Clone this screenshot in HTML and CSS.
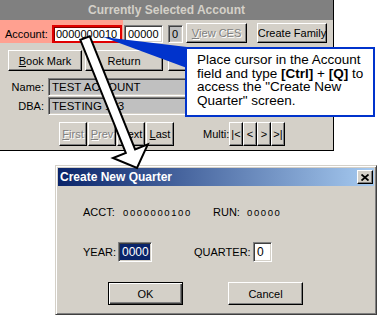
FILE: index.html
```html
<!DOCTYPE html>
<html lang="en">
    <head>
        <meta charset="utf-8"/>
        <title>Create New Quarter</title>
        <link rel="stylesheet" href="styles.css">
    </head>
    <body>
        <div class="screen">
            <div class="panel">
                <div class="panel-title">Currently Selected Account</div>
                <div class="acct-row">
                    <div class="acct-hl">
                        <span class="acct-lbl">Account:</span>
                        <div class="field acct-field">0000000010</div>
                    </div>
                    <div class="field f-run">00000</div>
                    <div class="field f-q gray">0</div>
                    <div class="btn disabled b-ces"><u>V</u>iew CES</div>
                    <div class="btn b-family">Create Family</div>
                </div>
                <div class="btn-row">
                    <div class="btn b-mark"><u>B</u>ook Mark</div>
                    <div class="btn b-return">Return</div>
                    <div class="btn b-hidden"></div>
                </div>
                <div class="info-row">
                    <span class="info-lbl">Name:</span>
                    <div class="field gray info-field">TEST ACCOUNT</div>
                </div>
                <div class="info-row dba">
                    <span class="info-lbl">DBA:</span>
                    <div class="field gray info-field">TESTING 123</div>
                </div>
                <div class="nav-row">
                    <div class="btn nav disabled"><u>F</u>irst</div>
                    <div class="btn nav disabled"><u>P</u>rev</div>
                    <div class="btn nav"><u>N</u>ext</div>
                    <div class="btn nav"><u>L</u>ast</div>
                    <span class="multi-lbl">Multi:</span>
                    <div class="btn mb">|&lt;</div>
                    <div class="btn mb">&lt;</div>
                    <div class="btn mb">&gt;</div>
                    <div class="btn mb">&gt;|</div>
                </div>
            </div>

            <div class="dlg">
                <div class="dlg-title">
                    <span>Create New Quarter</span>
                    <div class="btn dlg-close">
                        <svg width="8" height="7" viewBox="0 0 8 7">
                            <path d="M0.5 0.5 L7.5 6.5 M7.5 0.5 L0.5 6.5" stroke="#000" stroke-width="1.8" fill="none"/>
                        </svg>
                    </div>
                </div>
                <div class="dlg-body">
                    <div class="dlg-row r-acct">
                        <span class="l-acct">ACCT:</span>
                        <span class="val v-acct">0000000100</span>
                        <span class="l-run">RUN:</span>
                        <span class="val">00000</span>
                    </div>
                    <div class="dlg-row r-year">
                        <span class="l-year">YEAR:</span>
                        <div class="field in-year sel">0000</div>
                        <span class="l-quarter">QUARTER:</span>
                        <div class="field in-quarter">0</div>
                    </div>
                    <div class="dlg-row r-btns">
                        <div class="btn dlg-btn default">OK</div>
                        <div class="btn dlg-btn cancel">Cancel</div>
                    </div>
                </div>
            </div>

            <div class="callout">
                Place cursor in the Account<br>
                field and type <b>[Ctrl]</b> + <b>[Q]</b> to<br>
                access the "Create New<br>
                Quarter" screen.
            </div>

            <svg class="overlay" width="380" height="316" viewBox="0 0 380 316">
                <polygon points="103,37 187,47 187,68" fill="#0033cc"/>
                <polygon points="89.7,36.2 135.1,149.4 147.8,144.4 137,168 113,158 125.8,153 80.3,39.8"
                         fill="#fff" stroke="#000" stroke-width="2" stroke-linejoin="miter"/>
            </svg>
        </div>
    </body>
</html>
```

FILE: styles.css
```css
* {
    box-sizing: border-box;
}

html, body {
    margin: 0;
    padding: 0;
    background: #fff;
    font-family: "Liberation Sans", Arial, sans-serif;
    font-size: 11px;
    color: #000;
}

.screen {
    position: relative;
    width: 380px;
    height: 316px;
    overflow: hidden;
}

/* account panel */

.panel {
    width: 334px;
    height: 151px;
    background: #d4d0c8;
    border-right: 1px solid #000;
    border-bottom: 1px solid #000;
    display: flex;
    flex-direction: column;
}

.panel-title {
    height: 20px;
    background: #808080;
    color: #d4d0c8;
    font-weight: bold;
    font-size: 12px;
    line-height: 21px;
    text-align: center;
}

.acct-row {
    display: flex;
    align-items: flex-start;
    height: 23px;
}

.acct-hl {
    display: flex;
    align-items: flex-start;
    width: 123px;
    height: 23px;
    padding: 5px 0 0 5px;
    background: #ffa090;
}

.acct-lbl {
    width: 47px;
    line-height: 19px;
}

.field {
    height: 18px;
    border: 1px solid;
    border-color: #808080 #fff #fff #808080;
    box-shadow: inset 1px 1px #404040, inset -1px -1px #d4d0c8;
    background: #fff;
    line-height: 16px;
    padding-left: 3px;
    white-space: nowrap;
    overflow: hidden;
}

.field.gray {
    background: #c0c0c0;
}

.acct-field {
    width: 70px;
    border: 2px solid #e00000;
    box-shadow: inset 1px 1px #800000;
    line-height: 15px;
    padding-left: 2px;
}

.f-run {
    width: 39px;
    margin: 5px 0 0 1px;
}

.f-q {
    width: 15px;
    margin: 5px 0 0 5px;
}

.btn {
    display: flex;
    align-items: center;
    justify-content: center;
    background: #d4d0c8;
    border: 1px solid;
    border-color: #fff #000 #000 #fff;
    box-shadow: inset -1px -1px #808080;
    white-space: nowrap;
}

.btn.disabled {
    color: #808080;
    text-shadow: 1px 1px #fff;
}

.b-ces {
    width: 61px;
    height: 20px;
    margin: 3px 0 0 3px;
}

.b-family {
    width: 70px;
    height: 20px;
    margin: 3px 0 0 10px;
}

.btn-row {
    display: flex;
    height: 21px;
    margin-top: 7px;
    padding-left: 8px;
}

.b-mark {
    width: 74px;
}

.b-return {
    width: 78px;
    margin-left: 3px;
}

.b-hidden {
    width: 70px;
    margin-left: 5px;
}

.info-row {
    display: flex;
    align-items: center;
    height: 18px;
    margin-top: 7px;
}

.info-row.dba {
    margin-top: 1px;
}

.info-lbl {
    width: 44px;
    text-align: right;
}

.info-field {
    width: 280px;
    margin-left: 4px;
    font-size: 11.5px;
}

.nav-row {
    display: flex;
    align-items: center;
    height: 24px;
    margin-top: 7px;
    padding-left: 59px;
}

.nav-row .nav {
    width: 28px;
    height: 24px;
    margin-right: 1px;
}

.multi-lbl {
    width: 26px;
    margin-left: 28px;
}

.nav-row .mb {
    width: 14px;
    height: 24px;
}

/* dialog */

.dlg {
    width: 322px;
    height: 150px;
    margin: 14px 0 0 55px;
    padding: 2px;
    background: #d4d0c8;
    border: 1px solid;
    border-color: #d4d0c8 #404040 #404040 #d4d0c8;
    box-shadow: inset 1px 1px #fff, inset -1px -1px #808080;
}

.dlg-title {
    display: flex;
    align-items: center;
    justify-content: space-between;
    height: 18px;
    padding: 0 1px 0 2px;
    background: linear-gradient(to right, #0a246a, #a6caf0);
    color: #fff;
    font-weight: bold;
    font-size: 12px;
}

.dlg-close {
    width: 16px;
    height: 14px;
}

.dlg-body {
    padding: 18px 0 0 25px;
}

.dlg-row {
    display: flex;
    align-items: center;
}

.r-acct {
    height: 16px;
}

.l-acct {
    width: 40px;
}

.val {
    font-size: 9.5px;
    letter-spacing: 1.6px;
}

.v-acct {
    width: 90px;
}

.l-run {
    width: 34px;
}

.r-year {
    height: 20px;
    margin-top: 22px;
}

.l-year {
    width: 35px;
}

.dlg-row .field {
    height: 20px;
    line-height: 18px;
    font-size: 12px;
    padding-left: 3px;
}

.in-year {
    width: 34px;
}

.in-year.sel {
    background: #0a246a;
    color: #fff;
}

.l-quarter {
    width: 59px;
    margin-left: 42px;
}

.in-quarter {
    width: 19px;
}

.r-btns {
    height: 23px;
    margin-top: 20px;
    padding-left: 25px;
}

.dlg-btn {
    width: 75px;
    height: 23px;
}

.dlg-btn.default {
    border: 1px solid #000;
    box-shadow: inset 1px 1px #fff, inset -1px -1px #404040, inset -2px -2px #808080;
}

.dlg-btn.cancel {
    margin-left: 45px;
}

/* callout and arrow lying over the screens */

.callout {
    position: absolute;
    left: 185px;
    top: 47px;
    width: 190px;
    height: 70px;
    padding: 4px 0 0 10px;
    background: #fff;
    border: 2px solid #0033cc;
    font-size: 13.5px;
    line-height: 13.7px;
    white-space: nowrap;
}

.overlay {
    position: absolute;
    left: 0;
    top: 0;
    pointer-events: none;
}
```
